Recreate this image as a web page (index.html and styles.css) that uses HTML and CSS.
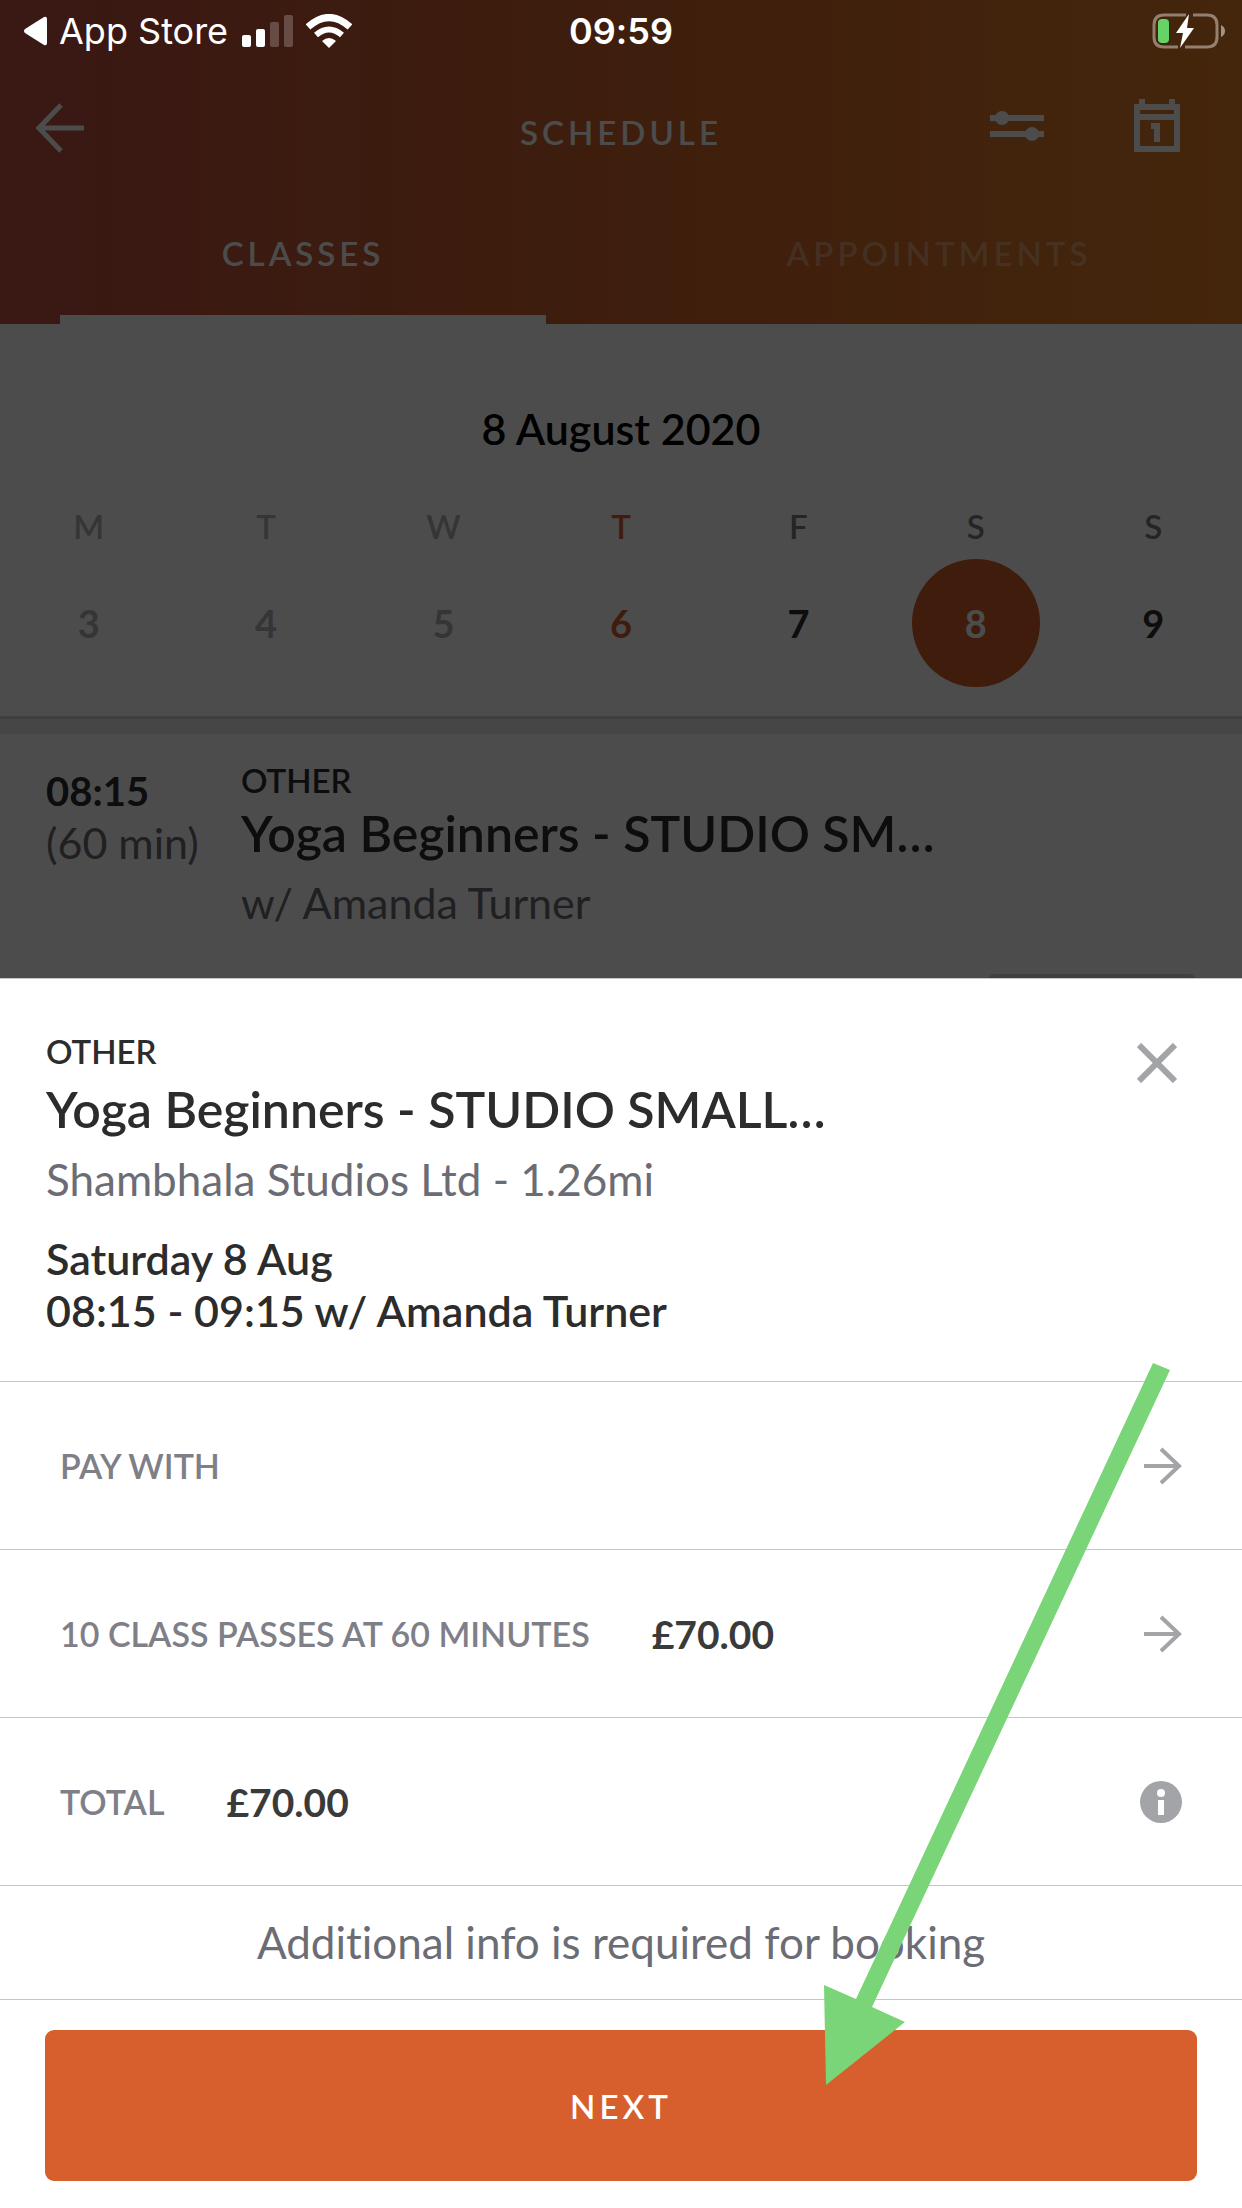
FILE: index.html
```html
<!DOCTYPE html>
<html lang="en">
<head>
    <meta charset="UTF-8">
    <meta name="viewport" content="width=device-width, initial-scale=1.0">
    <title>Schedule - Book a class</title>
    <link rel="stylesheet" href="styles.css">
</head>
<body>

    <!-- Status bar -->
    <div class="status-bar">
        <a href="#" class="back-to-app">
            <svg width="24" height="30" viewBox="0 0 24 30"><path d="M21 1 Q24 0 24 3 V27 Q24 30 21 29 L2 17 Q0 15 2 13 Z" fill="#fff"/></svg>
            App Store
        </a>
        <svg class="signal" width="52" height="34" viewBox="0 0 52 34" fill="#fff">
            <rect x="0" y="21" width="9" height="12" rx="2"/>
            <rect x="14" y="15" width="9" height="18" rx="2"/>
            <rect x="28" y="8" width="9" height="25" rx="2" opacity=".22"/>
            <rect x="42" y="1" width="9" height="32" rx="2" opacity=".22"/>
        </svg>
        <svg class="wifi" width="46" height="34" viewBox="0 0 46 34">
            <path d="M23 34 L16 27 Q23 21 30 27 Z" fill="#fff"/>
            <path d="M10 21 Q23 10 36 21" fill="none" stroke="#fff" stroke-width="6"/>
            <path d="M2 13 Q23 -6 44 13" fill="none" stroke="#fff" stroke-width="7"/>
        </svg>
        <time class="clock">09:59</time>
        <svg class="battery" width="74" height="36" viewBox="0 0 74 36">
            <path d="M34 2 H12 Q2 2 2 12 V24 Q2 34 12 34 H26 M33 34 H55 Q65 34 65 24 V12 Q65 2 55 2 H41" fill="none" stroke="#fff" stroke-opacity=".42" stroke-width="3"/>
            <path d="M69 12 Q73 14 73 18 Q73 22 69 24 Z" fill="#fff" fill-opacity=".5"/>
            <rect x="6" y="6" width="11" height="24" rx="4" fill="#66d366"/>
            <path d="M37 1 L24 20 H31 L28 35 L42 15 H35 Z" fill="#fff"/>
        </svg>
    </div>

    <!-- Schedule screen -->
    <div class="schedule">
        <header class="header">
            <div class="nav">
                <button type="button" class="icon-btn back" aria-label="Back">
                    <svg width="50" height="50" viewBox="0 0 50 50" fill="none" stroke="#fff" stroke-width="5"><path d="M49 25 H4 M26 2 L4 25 L26 48"/></svg>
                </button>
                <h1>SCHEDULE</h1>
                <div class="nav-actions">
                    <button type="button" class="icon-btn" aria-label="Filter">
                        <svg width="54" height="30" viewBox="0 0 54 30" fill="#fff">
                            <rect y="4" width="54" height="6"/><circle cx="12" cy="7" r="7"/>
                            <rect y="20" width="54" height="6"/><circle cx="42" cy="23" r="7"/>
                        </svg>
                    </button>
                    <button type="button" class="icon-btn" aria-label="Today">
                        <svg width="46" height="54" viewBox="0 0 46 54" fill="#fff">
                            <path fill-rule="evenodd" d="M0 5 H5 V0 H11 V5 H35 V0 H41 V5 H46 V53 H0 Z M6 11 V15 H40 V11 Z M6 21 V47 H40 V21 Z"/>
                            <path d="M17 24 H26 V43 H20 V30 H17 Z"/>
                        </svg>
                    </button>
                </div>
            </div>
            <nav class="tabs">
                <a href="#" class="tab active">CLASSES</a>
                <a href="#" class="tab">APPOINTMENTS</a>
            </nav>
        </header>

        <section class="calendar">
            <h2>8 August 2020</h2>
            <div class="week">
                <div class="day past"><span>M</span><button type="button">3</button></div>
                <div class="day past"><span>T</span><button type="button">4</button></div>
                <div class="day past"><span>W</span><button type="button">5</button></div>
                <div class="day today"><span>T</span><button type="button">6</button></div>
                <div class="day"><span>F</span><button type="button">7</button></div>
                <div class="day selected"><span>S</span><button type="button">8</button></div>
                <div class="day"><span>S</span><button type="button">9</button></div>
            </div>
        </section>

        <article class="class-item">
            <div class="class-time">
                <strong>08:15</strong>
                <span>(60 min)</span>
            </div>
            <div class="class-info">
                <p class="category">OTHER</p>
                <h3 class="class-title">Yoga Beginners - STUDIO SM…</h3>
                <p class="teacher">w/ Amanda Turner</p>
            </div>
            <button type="button" class="book-btn" aria-label="Book"></button>
        </article>
    </div>

    <div class="backdrop"></div>

    <!-- Booking sheet -->
    <section class="sheet">
        <div class="summary">
            <div>
                <p class="category">OTHER</p>
                <h2 class="class-title">Yoga Beginners - STUDIO SMALL…</h2>
                <p class="venue">Shambhala Studios Ltd - 1.26mi</p>
                <p class="when">Saturday 8 Aug<br>08:15 - 09:15 w/ Amanda Turner</p>
            </div>
            <button type="button" class="icon-btn close" aria-label="Close">
                <svg width="40" height="40" viewBox="0 0 40 40" stroke="#a2a4a8" stroke-width="6"><path d="M2 2 L38 38 M38 2 L2 38"/></svg>
            </button>
        </div>

        <button type="button" class="row">
            <span class="row-label">PAY WITH</span>
            <svg class="row-arrow" width="38" height="38" viewBox="0 0 38 38" fill="none" stroke="#a2a4a8" stroke-width="4"><path d="M0 19 H34 M17 2 L35 19 L17 36"/></svg>
        </button>
        <button type="button" class="row">
            <span class="row-label">10 CLASS PASSES AT 60 MINUTES</span>
            <span class="price">£70.00</span>
            <svg class="row-arrow" width="38" height="38" viewBox="0 0 38 38" fill="none" stroke="#a2a4a8" stroke-width="4"><path d="M0 19 H34 M17 2 L35 19 L17 36"/></svg>
        </button>
        <div class="row">
            <span class="row-label">TOTAL</span>
            <span class="price">£70.00</span>
            <button type="button" class="icon-btn info" aria-label="More information">
                <svg width="42" height="42" viewBox="0 0 42 42">
                    <circle cx="21" cy="21" r="21" fill="#a2a4a8"/>
                    <circle cx="21" cy="12" r="4" fill="#fff"/>
                    <rect x="18" y="19" width="6" height="15" fill="#fff"/>
                </svg>
            </button>
        </div>

        <p class="note">Additional info is required for booking</p>

        <div class="footer">
            <button type="button" class="next-btn">NEXT</button>
        </div>

        <!-- Pointer to the next button -->
        <svg class="pointer" width="346" height="722" viewBox="0 0 346 722">
            <path d="M329 0 L346 7 L48 644 L81 659 L2 722 L0 622 L32 636 Z" fill="#79d577"/>
        </svg>
    </section>

</body>
</html>
```
FILE: styles.css
```css
* {
    box-sizing: border-box;
}

body {
    position: relative;
    min-height: 100vh;
    margin: 0;
    overflow: hidden;
    background: #ffffff;
    color: #2c2c2c;
    font-family: Lato, "Open Sans", sans-serif;
    font-size: 40px;
    font-variant-ligatures: none;
}

h1, h2, h3, p {
    margin: 0;
    font-weight: 600;
}

button {
    padding: 0;
    border: none;
    background: none;
    color: inherit;
    font-family: inherit;
    cursor: pointer;
}

a {
    color: inherit;
    text-decoration: none;
}

svg {
    display: block;
}

/* Status bar */
.status-bar {
    position: absolute;
    top: 0;
    left: 0;
    right: 0;
    z-index: 3;
    display: flex;
    align-items: center;
    height: 62px;
    padding: 0 16px 0 23px;
    color: #ffffff;
    font-family: Inter, sans-serif;
    font-size: 36px;
}

.back-to-app {
    display: flex;
    align-items: center;
    gap: 12px;
}

.signal {
    margin-left: 14px;
}

.wifi {
    margin-left: 12px;
}

.clock {
    position: absolute;
    left: 50%;
    transform: translateX(-50%);
    font-weight: 600;
}

.battery {
    margin-left: auto;
}

/* Schedule header */
.header {
    padding-top: 60px;
    background: linear-gradient(90deg, #c15043, #d0642c 50%, #e4802a);
    color: #ffffff;
    font-size: 33px;
    letter-spacing: 4px;
}

.nav {
    display: grid;
    grid-template-columns: 1fr auto 1fr;
    align-items: center;
    height: 136px;
    padding: 0 62px 0 35px;
}

.nav h1 {
    padding: 8px 0 0 27px;
    font-size: 33px;
}

.back {
    justify-self: start;
}

.nav-actions {
    display: flex;
    align-items: center;
    justify-content: flex-end;
    gap: 90px;
    padding-bottom: 5px;
}

.tabs {
    display: grid;
    grid-template-columns: 1fr 1fr;
    gap: 150px;
    padding: 0 60px;
}

.tab {
    padding-bottom: 5px;
    border-bottom: 9px solid transparent;
    line-height: 114px;
    text-align: center;
    font-weight: 600;
    color: rgba(255, 255, 255, 0.35);
}

.tab.active {
    border-color: #ffffff;
    color: #ffffff;
}

/* Week */
.calendar {
    padding: 75px 0 29px;
    border-bottom: 3px solid #d4d4d4;
    box-shadow: 0 15px 0 #ececec;
}

.calendar h2 {
    margin-bottom: 35px;
    font-size: 43px;
    line-height: 60px;
    text-align: center;
    color: #000000;
}

.week {
    display: grid;
    grid-template-columns: repeat(7, 1fr);
}

.day {
    display: flex;
    flex-direction: column;
    align-items: center;
    color: #7b7c84;
    font-size: 33px;
    line-height: 64px;
    font-weight: 600;
}

.day button {
    width: 128px;
    height: 128px;
    margin-top: 1px;
    border-radius: 50%;
    color: #2c2c2c;
    font-size: 38px;
    font-weight: 700;
}

.day.past,
.day.past button {
    color: #b2b3b8;
}

.day.today,
.day.today button {
    color: #d65f2d;
}

.day.selected button {
    background: #d65f2d;
    color: #ffffff;
}

/* Class in the list */
.class-item {
    display: grid;
    grid-template-columns: 195px 1fr;
    margin-top: 15px;
    padding: 26px 45px 0 46px;
}

.class-time {
    padding-top: 5px;
    line-height: 52px;
}

.class-time strong,
.class-time span {
    display: block;
}

.class-time strong {
    font-weight: 700;
}

.class-time span,
.teacher {
    color: #6b6c74;
    font-size: 43px;
    font-weight: 400;
}

.category {
    font-size: 33px;
    line-height: 40px;
}

.class-item .class-title {
    line-height: 66px;
}

.class-title {
    font-size: 50px;
    white-space: nowrap;
}

.teacher {
    line-height: 74px;
}

.book-btn {
    grid-column: 2;
    justify-self: end;
    width: 210px;
    height: 84px;
    margin-top: 34px;
    border-radius: 8px;
    background: #d4d4d4;
}

.backdrop {
    position: absolute;
    inset: 0;
    z-index: 1;
    background: rgba(0, 0, 0, 0.7);
}

/* Booking sheet */
.sheet {
    position: absolute;
    left: 0;
    right: 0;
    bottom: 0;
    z-index: 2;
    border-top: 1px solid #c4c5c7;
    background: #ffffff;
}

.summary {
    display: flex;
    justify-content: space-between;
    align-items: flex-start;
    padding: 52px 65px 44px 46px;
    border-bottom: 1px solid #c4c5c7;
}

.summary .class-title {
    line-height: 76px;
}

.venue {
    color: #6b6c74;
    font-size: 44px;
    font-weight: 400;
    line-height: 64px;
}

.when {
    margin-top: 22px;
    font-size: 43px;
    line-height: 52px;
}

.close {
    margin-top: 12px;
}

.row {
    display: flex;
    align-items: center;
    gap: 62px;
    width: 100%;
    height: 168px;
    padding: 0 60px;
    border-bottom: 1px solid #c4c5c7;
    text-align: left;
}

.row-label {
    color: #7f8087;
    font-size: 34px;
    font-weight: 600;
}

.price {
    color: #3a3a3a;
    font-size: 39px;
    font-weight: 700;
}

.row-arrow,
.info {
    margin-left: auto;
}

.note {
    border-bottom: 1px solid #c4c5c7;
    color: #6b6c74;
    font-size: 44px;
    font-weight: 400;
    line-height: 113px;
    text-align: center;
}

.footer {
    padding: 30px 45px 27px;
}

.next-btn {
    display: block;
    width: 100%;
    height: 151px;
    border-radius: 9px;
    background: #d65f2d;
    color: #ffffff;
    font-size: 33px;
    font-weight: 600;
    letter-spacing: 4px;
}

.pointer {
    position: absolute;
    right: 72px;
    bottom: 123px;
    pointer-events: none;
}
```
